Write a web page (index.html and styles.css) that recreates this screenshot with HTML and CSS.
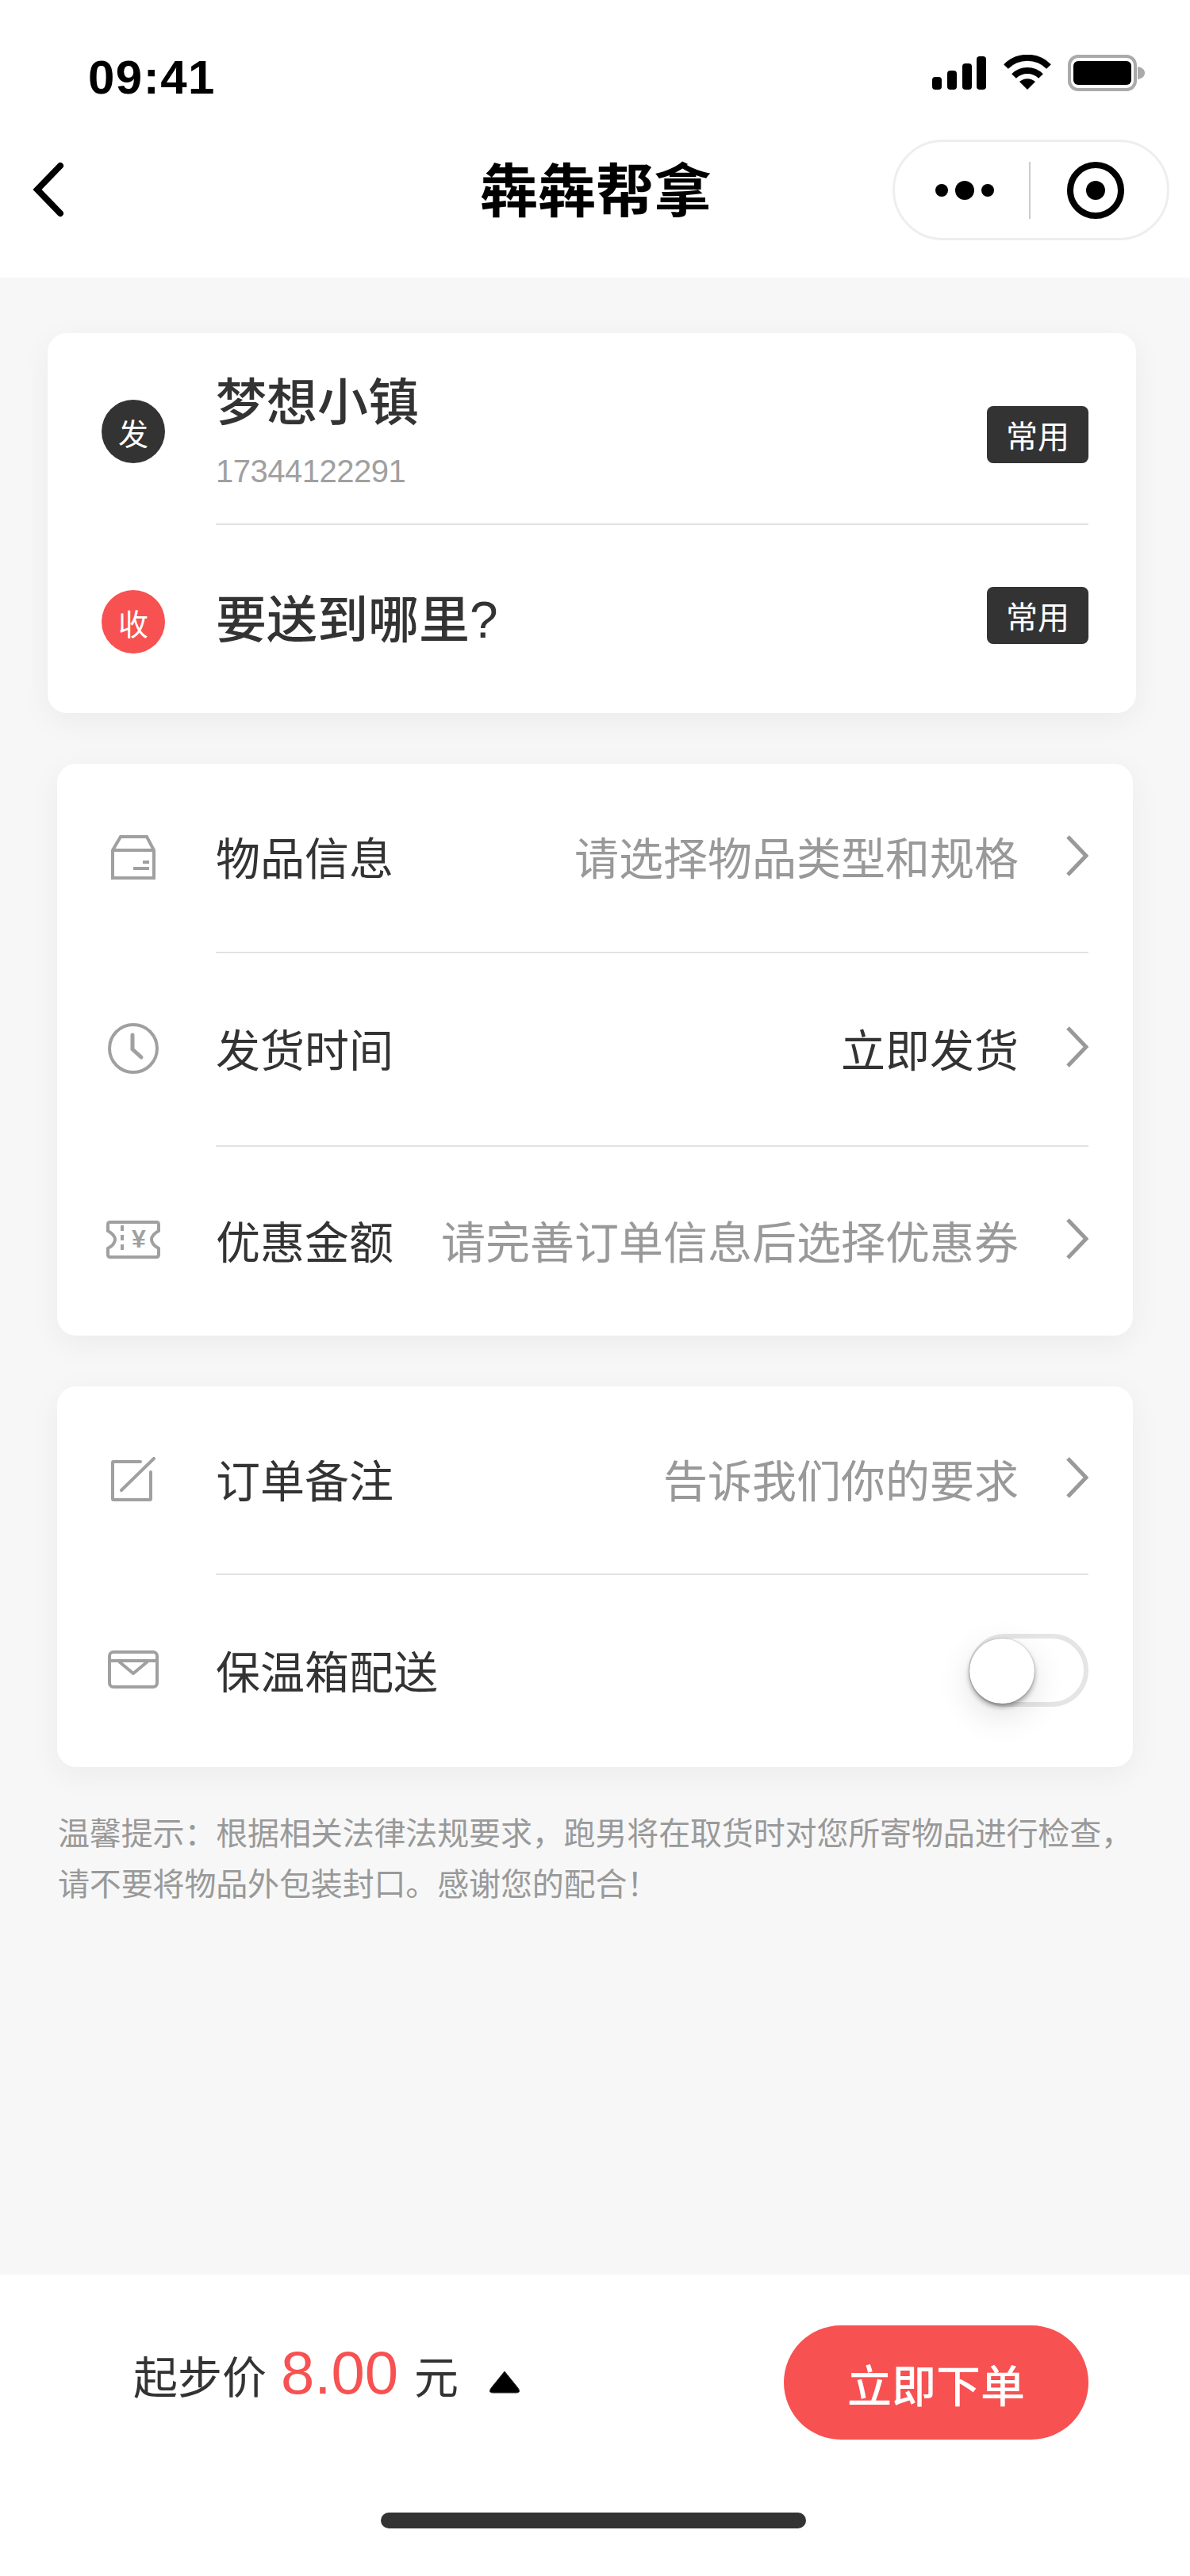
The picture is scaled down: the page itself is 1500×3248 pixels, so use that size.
FILE: index.html
```html
<!DOCTYPE html>
<html lang="zh-CN">
<head>
  <meta charset="UTF-8">
  <title>犇犇帮拿</title>
  <link rel="stylesheet" href="styles.css">
</head>
<body>
<div class="page">

  <header class="top">
    <div class="status">
      <span class="time">09:41</span>
      <svg class="ic-signal" width="68" height="42" viewBox="0 0 68 42">
        <rect x="0" y="26" width="12" height="16" rx="4"/>
        <rect x="19" y="18" width="12" height="24" rx="4"/>
        <rect x="38" y="9" width="12" height="33" rx="4"/>
        <rect x="56" y="0" width="12" height="42" rx="4"/>
      </svg>
      <svg class="ic-wifi" width="62" height="44" viewBox="0 0 62 44">
        <path d="M4 15 A38 38 0 0 1 58 15" fill="none" stroke="#000" stroke-width="8"/>
        <path d="M14 27 A24 24 0 0 1 48 27" fill="none" stroke="#000" stroke-width="8"/>
        <path d="M31 44 L21 34 A15 15 0 0 1 41 34 Z"/>
      </svg>
      <svg class="ic-battery" width="98" height="46" viewBox="0 0 98 46">
        <rect x="2" y="2" width="83" height="42" rx="11" fill="none" stroke="#aaa" stroke-width="4"/>
        <rect x="7" y="8" width="73" height="30" rx="6"/>
        <path d="M88 15 C94 16 97 19 97 23 C97 27 94 30 88 31 Z" fill="#aaa"/>
      </svg>
    </div>
    <div class="nav">
      <svg class="ic-back" width="40" height="70" viewBox="0 0 40 70">
        <path d="M35 5 L6 35 L35 65" fill="none" stroke="#000" stroke-width="8" stroke-linecap="round"/>
      </svg>
      <h1 class="nav-title">犇犇帮拿</h1>
      <div class="capsule">
        <div class="capsule-more">
          <i class="dot"></i><i class="dot dot-big"></i><i class="dot"></i>
        </div>
        <i class="capsule-line"></i>
        <svg width="72" height="72" viewBox="0 0 72 72">
          <circle cx="36" cy="36" r="32" fill="none" stroke="#000" stroke-width="8"/>
          <circle cx="36" cy="36" r="12"/>
        </svg>
      </div>
    </div>
  </header>

  <main class="content">
    <section class="card card-addr">
      <div class="addr-row addr-from">
        <span class="badge badge-dark">发</span>
        <div class="addr-body">
          <div class="addr-text">
            <div class="addr-name">梦想小镇</div>
            <div class="addr-phone">17344122291</div>
          </div>
          <span class="tag">常用</span>
        </div>
      </div>
      <div class="addr-row addr-to">
        <span class="badge badge-red">收</span>
        <div class="addr-body">
          <div class="addr-name">要送到哪里?</div>
          <span class="tag">常用</span>
        </div>
      </div>
    </section>

    <section class="card card-list">
      <div class="row">
        <span class="row-icon">
          <svg width="56" height="56" viewBox="0 0 56 56" class="line-ic">
            <path d="M2 19 L12 2 H45 L54 19 V54 H2 Z M2 19 H54"/>
            <path d="M28 42 H48 M40 34 H48"/>
          </svg>
        </span>
        <div class="row-body">
          <span class="row-label">物品信息</span>
          <span class="row-value">请选择物品类型和规格</span>
          <svg class="chevron" width="28" height="52" viewBox="0 0 28 52"><path d="M2 2 L25 26 L2 50"/></svg>
        </div>
      </div>
      <div class="row row-tall">
        <span class="row-icon">
          <svg width="64" height="64" viewBox="0 0 64 64" class="line-ic">
            <circle cx="32" cy="32" r="30"/>
            <path d="M31 15 V33 L42 43" stroke-width="5" stroke-linecap="round" stroke-linejoin="round"/>
          </svg>
        </span>
        <div class="row-body">
          <span class="row-label">发货时间</span>
          <span class="row-value row-value-set">立即发货</span>
          <svg class="chevron" width="28" height="52" viewBox="0 0 28 52"><path d="M2 2 L25 26 L2 50"/></svg>
        </div>
      </div>
      <div class="row row-short row-last">
        <span class="row-icon">
          <svg width="68" height="48" viewBox="0 0 68 48" class="line-ic">
            <path d="M5 2 H63 Q66 2 66 5 V13 Q57 18 57 24 Q57 30 66 35 V43 Q66 46 63 46 H5 Q2 46 2 43 V35 Q11 30 11 24 Q11 18 2 13 V5 Q2 2 5 2 Z"/>
            <path d="M20 6 V42" stroke-dasharray="7 5"/>
            <text x="41" y="34" class="ticket-yen">¥</text>
          </svg>
        </span>
        <div class="row-body">
          <span class="row-label">优惠金额</span>
          <span class="row-value">请完善订单信息后选择优惠券</span>
          <svg class="chevron" width="28" height="52" viewBox="0 0 28 52"><path d="M2 2 L25 26 L2 50"/></svg>
        </div>
      </div>
    </section>

    <section class="card card-list card-extra">
      <div class="row row-short">
        <span class="row-icon">
          <svg width="56" height="56" viewBox="0 0 56 56" class="line-ic">
            <path d="M37 6 H3 Q2 6 2 7 V53 Q2 54 3 54 H49 Q50 54 50 53 V19" stroke-linecap="round"/>
            <path d="M13 42 L54 2" stroke-linecap="round"/>
          </svg>
        </span>
        <div class="row-body">
          <span class="row-label">订单备注</span>
          <span class="row-value">告诉我们你的要求</span>
          <svg class="chevron" width="28" height="52" viewBox="0 0 28 52"><path d="M2 2 L25 26 L2 50"/></svg>
        </div>
      </div>
      <div class="row row-switch row-last">
        <span class="row-icon">
          <svg width="64" height="48" viewBox="0 0 64 48" class="line-ic">
            <rect x="2" y="2" width="60" height="44" rx="5"/>
            <path d="M2 13 H62 M14 14 L32 29 L50 14" stroke-linejoin="round"/>
          </svg>
        </span>
        <div class="row-body">
          <span class="row-label">保温箱配送</span>
          <span class="switch"><i class="switch-knob"></i></span>
        </div>
      </div>
    </section>

    <p class="notice">温馨提示：根据相关法律法规要求，跑男将在取货时对您所寄物品进行检查，<br>请不要将物品外包装封口。感谢您的配合！</p>
  </main>

  <footer class="bottom">
    <div class="bottom-bar">
      <div class="price">
        <span>起步价</span>
        <span class="price-num">8.00</span>
        <span>元</span>
        <svg class="price-arrow" width="40" height="29" viewBox="0 0 40 29"><path d="M20 1 L37 22 Q41 28 35 28 H5 Q-1 28 3 22 Z" stroke="#333" stroke-width="1"/></svg>
      </div>
      <button class="submit">立即下单</button>
    </div>
    <div class="home-bar"></div>
  </footer>

</div>
</body>
</html>
```

FILE: styles.css
```css
* {
  box-sizing: border-box;
}

body {
  margin: 0;
  font-family: "Liberation Sans", "Noto Sans CJK SC", sans-serif;
  color: #333;
  background: #f7f7f7;
}

.page {
  width: 1500px;
  height: 3248px;
  display: flex;
  flex-direction: column;
  overflow: hidden;
}

/* status bar + nav */
.top {
  height: 350px;
  background: #fff;
}

.status {
  height: 176px;
  display: flex;
  align-items: flex-start;
  padding: 69px 56px 0 111px;
  color: #000;
}

.time {
  font-size: 60px;
  line-height: 58px;
  font-weight: 700;
  letter-spacing: 1.5px;
  margin-right: auto;
}

.ic-signal {
  margin-top: 2px;
}

.ic-wifi {
  margin-left: 21px;
}

.ic-battery {
  margin-left: 20px;
}

.nav {
  display: flex;
  align-items: flex-start;
  padding-left: 41px;
}

.ic-back {
  margin-top: 28px;
}

.nav-title {
  margin: 20px 0 0 524px;
  font-size: 73px;
  line-height: 92px;
  font-weight: 700;
  color: #000;
}

.capsule {
  margin-left: auto;
  margin-right: 26px;
  width: 349px;
  height: 127px;
  border: 3px solid #eee;
  border-radius: 64px;
  display: flex;
  align-items: center;
  padding-left: 51px;
}

.capsule-more {
  display: flex;
  align-items: center;
  gap: 9px;
}

.dot {
  width: 16px;
  height: 16px;
  border-radius: 50%;
  background: #000;
}

.dot-big {
  width: 24px;
  height: 24px;
}

.capsule-line {
  width: 2px;
  height: 72px;
  margin: 0 46px 0 44px;
  background: #ccc;
}

/* cards */
.content {
  flex: 1;
}

.card {
  background: #fff;
  border-radius: 24px;
  box-shadow: 0 10px 40px rgba(0, 0, 0, 0.05);
}

.card-addr {
  width: 1372px;
  height: 479px;
  margin: 70px 0 0 60px;
  padding: 0 60px 0 68px;
}

.addr-row {
  display: flex;
  align-items: flex-start;
}

.addr-from {
  height: 242px;
}

.addr-to {
  height: 237px;
}

.badge {
  width: 80px;
  height: 80px;
  margin-right: 64px;
  border-radius: 50%;
  display: flex;
  align-items: center;
  justify-content: center;
  flex: none;
  color: #fff;
  font-size: 38px;
}

.addr-from .badge {
  margin-top: 84px;
}

.addr-to .badge {
  margin-top: 82px;
}

.badge-dark {
  background: #333;
}

.badge-red {
  background: #f75151;
}

.addr-body {
  flex: 1;
  height: 100%;
  display: flex;
  justify-content: space-between;
  align-items: flex-start;
}

.addr-from .addr-body {
  border-bottom: 2px solid #e2e2e2;
}

.addr-name {
  font-size: 64px;
  line-height: 84px;
  font-weight: 500;
}

.addr-from .addr-name {
  margin-top: 46px;
}

.addr-to .addr-name {
  margin-top: 78px;
}

.addr-phone {
  margin-top: 20px;
  font-size: 40px;
  line-height: 48px;
  letter-spacing: -0.5px;
  color: #a0a0a0;
}

.tag {
  width: 128px;
  height: 72px;
  border-radius: 8px;
  background: #333;
  color: #fff;
  font-size: 40px;
  display: flex;
  align-items: center;
  justify-content: center;
}

.addr-from .tag {
  margin-top: 92px;
}

.addr-to .tag {
  margin-top: 78px;
}

.card-list {
  width: 1356px;
  margin: 64px 0 0 72px;
  padding: 0 56px;
}

.card-extra {
  margin-top: 64px;
}

.row {
  height: 239px;
  display: flex;
  align-items: stretch;
}

.row-tall {
  height: 244px;
}

.row-short {
  height: 238px;
}

.row-switch {
  height: 242px;
}

.row-icon {
  width: 80px;
  margin-right: 64px;
  padding-bottom: 4px;
  flex: none;
  display: flex;
  align-items: center;
  justify-content: center;
}

.line-ic {
  fill: none;
  stroke: #a0a0a0;
  stroke-width: 4;
}

.ticket-yen {
  font-size: 32px;
  font-weight: 700;
  text-anchor: middle;
  fill: #a0a0a0;
  stroke: none;
}

.row-body {
  flex: 1;
  padding-bottom: 6px;
  display: flex;
  align-items: center;
  border-bottom: 2px solid #e2e2e2;
}

.row-last .row-body {
  border-bottom: none;
}

.row-label {
  font-size: 56px;
  color: #333;
}

.row-value {
  margin-left: auto;
  font-size: 56px;
  color: #999;
}

.row-value-set {
  color: #333;
}

.chevron {
  margin-left: 60px;
  fill: none;
  stroke: #999;
  stroke-width: 5;
}

/* switch */
.switch {
  margin-left: auto;
  margin-top: 4px;
  position: relative;
  width: 151px;
  height: 92px;
  border: 6px solid #e5e5e5;
  border-radius: 46px;
}

.switch-knob {
  position: absolute;
  left: -5px;
  top: 0;
  width: 82px;
  height: 82px;
  border-radius: 50%;
  background: #fff;
  box-shadow: 0 4px 6px rgba(0, 0, 0, 0.35), 0 14px 44px rgba(0, 0, 0, 0.12), 0 0 2px rgba(0, 0, 0, 0.3);
}

.notice {
  margin: 52px 0 0 73px;
  font-size: 40px;
  line-height: 64px;
  letter-spacing: -0.15px;
  color: #999;
}

/* bottom bar */
.bottom {
  height: 380px;
  background: #fff;
}

.bottom-bar {
  height: 208px;
  padding: 64px 128px 0 168px;
  display: flex;
  justify-content: space-between;
  align-items: flex-start;
}

.price {
  margin-top: 16px;
  display: flex;
  align-items: baseline;
  font-size: 56px;
  color: #333;
}

.price-num {
  margin: 0 20px 0 18px;
  font-size: 76px;
  color: #f75151;
}

.price-arrow {
  margin: 0 0 19px 38px;
}

.submit {
  width: 384px;
  height: 144px;
  border: none;
  border-radius: 72px;
  background: #f75151;
  color: #fff;
  font-family: inherit;
  font-size: 56px;
  font-weight: 500;
}

.home-bar {
  width: 536px;
  height: 20px;
  margin: 92px 0 0 480px;
  border-radius: 10px;
  background: #333;
}
```
